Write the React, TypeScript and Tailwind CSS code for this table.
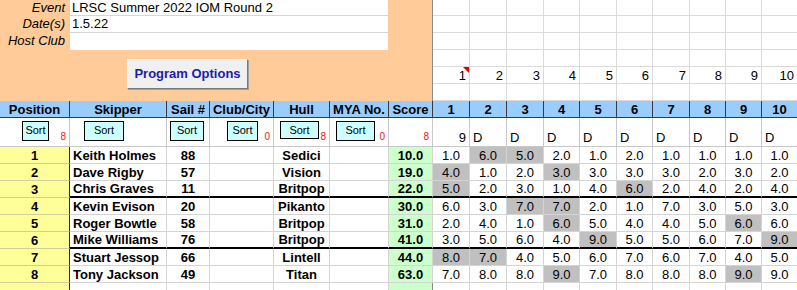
import React from "react";

const cols =
  "grid-cols-[70px_97px_43px_64px_56px_59px_44px_37px_37px_37px_36px_37px_36px_37px_36px_36px_36px]";
const raceCols = "grid-cols-[37px_37px_37px_36px_37px_36px_37px_36px_36px_36px]";

type Entry = {
  pos: number;
  name: string;
  sail: string;
  hull: string;
  score: string;
  races: number[];
  discards: number[];
};

const entries: Entry[] = [
  { pos: 1, name: "Keith Holmes", sail: "88", hull: "Sedici", score: "10.0", races: [1, 6, 5, 2, 1, 2, 1, 1, 1, 1], discards: [1, 2] },
  { pos: 2, name: "Dave Rigby", sail: "57", hull: "Vision", score: "19.0", races: [4, 1, 2, 3, 3, 3, 3, 2, 3, 2], discards: [0, 3] },
  { pos: 3, name: "Chris Graves", sail: "11", hull: "Britpop", score: "22.0", races: [5, 2, 3, 1, 4, 6, 2, 4, 2, 4], discards: [0, 5] },
  { pos: 4, name: "Kevin Evison", sail: "20", hull: "Pikanto", score: "30.0", races: [6, 3, 7, 7, 2, 1, 7, 3, 5, 3], discards: [2, 3] },
  { pos: 5, name: "Roger Bowtle", sail: "58", hull: "Britpop", score: "31.0", races: [2, 4, 1, 6, 5, 4, 4, 5, 6, 6], discards: [3, 8] },
  { pos: 6, name: "Mike Williams", sail: "76", hull: "Britpop", score: "41.0", races: [3, 5, 6, 4, 9, 5, 5, 6, 7, 9], discards: [4, 9] },
  { pos: 7, name: "Stuart Jessop", sail: "66", hull: "Lintell", score: "44.0", races: [8, 7, 4, 5, 6, 7, 6, 7, 4, 5], discards: [0, 1] },
  { pos: 8, name: "Tony Jackson", sail: "49", hull: "Titan", score: "63.0", races: [7, 8, 8, 9, 7, 8, 8, 8, 9, 9], discards: [3, 8] },
];

const headers = ["Position", "Skipper", "Sail #", "Club/City", "Hull", "MYA No.", "Score"];
const raceNums = [1, 2, 3, 4, 5, 6, 7, 8, 9, 10];

const meta = [
  { label: "Event", value: "LRSC Summer 2022 IOM Round 2" },
  { label: "Date(s)", value: "1.5.22" },
  { label: "Host Club", value: "" },
];

// button left offset, height, red count under it
const sorts = [
  { pl: "pl-[22px]", w: "w-[27px]", h: "h-[20px]", count: "8" },
  { pl: "pl-[14px]", w: "w-[40px]", h: "h-[20px]", count: "" },
  { pl: "pl-[3px]", w: "w-[34px]", h: "h-[20px]", count: "" },
  { pl: "pl-[17px]", w: "w-[31px]", h: "h-[20px]", count: "0" },
  { pl: "pl-[6px]", w: "w-[39px]", h: "h-[18px]", count: "8" },
  { pl: "pl-[6px]", w: "w-[39px]", h: "h-[20px]", count: "0" },
];

function SortButton({ w, h }: { w: string; h: string }) {
  return (
    <div
      className={`${w} ${h} flex shrink-0 justify-center border border-black bg-[#ccffff] pt-[2px] text-[11px] leading-[13px]`}
    >
      Sort
    </div>
  );
}

function ProgramOptions() {
  return (
    <button
      type="button"
      className="h-[30px] w-[121px] border border-t-[#fafafa] border-l-[#fafafa] border-b-[#7a7a7a] border-r-[#7a7a7a] bg-[#f0f0f0] text-[13px] font-bold text-[#1c1cab] shadow-[1px_1px_0_#a0a0a0]"
    >
      Program Options
    </button>
  );
}

export default function App() {
  return (
    <div className="h-[290px] w-[797px] overflow-hidden bg-white font-['Liberation_Sans',Arial,sans-serif] text-black">
      {/* top block */}
      <div className="flex h-[101px] w-max">
        <div className="flex w-[433px] shrink-0 flex-col border-r border-[#8a8a8a] bg-[#ffcc99]">
          {meta.map((m, i) => (
            <div key={m.label} className={`flex ${i === 0 ? "h-[16px]" : "h-[17px]"}`}>
              <div className="w-[70px] pr-[5px] text-right text-[13px] italic leading-[15px]">{m.label}</div>
              <div
                className={`w-[318px] bg-white pl-[2px] text-[13px] leading-[15px] ${
                  i < 2 ? "border-b border-[#d6d6d6]" : ""
                }`}
              >
                {m.value}
              </div>
            </div>
          ))}
          <div className="pl-[127px] pt-[9px]">
            <ProgramOptions />
          </div>
        </div>
        <div className={`grid ${raceCols} grid-rows-[16px_17px_17px_17px_17px_17px]`}>
          {Array.from({ length: 60 }).map((_, i) => {
            const row = Math.floor(i / 10);
            const col = i % 10;
            return (
              <div
                key={i}
                className="relative flex items-center justify-end border-r border-b border-[#dadada] pr-[3px] text-[13px] leading-[15px]"
              >
                {row === 4 && raceNums[col]}
                {row === 4 && col === 0 && (
                  <svg className="absolute right-0 top-0" width="6" height="6" viewBox="0 0 6 6">
                    <polygon points="0,0 6,0 6,6" fill="#e00000" />
                  </svg>
                )}
              </div>
            );
          })}
        </div>
      </div>

      {/* header row */}
      <div className={`grid ${cols} h-[17px] w-max`}>
        {headers.map((h) => (
          <div
            key={h}
            className="flex items-center justify-center border-r border-b border-[#3a3a3a] bg-[#99ccff] text-[13px] font-bold leading-[15px]"
          >
            {h}
          </div>
        ))}
        {raceNums.map((n) => (
          <div
            key={n}
            className="flex items-center justify-center border-r border-b border-[#3a3a3a] bg-[#99ccff] text-[13px] font-bold leading-[15px]"
          >
            {n}
          </div>
        ))}
      </div>

      {/* sort row */}
      <div className={`grid ${cols} h-[29px] w-max`}>
        {sorts.map((s, i) => (
          <div key={i} className={`flex border-r border-b border-[#c8c8c8] ${s.pl} pr-[3px]`}>
            <div className="pt-[3px]">
              <SortButton w={s.w} h={s.h} />
            </div>
            {s.count && (
              <span className="ml-auto self-end pb-[3px] text-[10px] leading-[12px] text-[#e01b1b]">{s.count}</span>
            )}
          </div>
        ))}
        <div className="flex items-end justify-end border-r border-b border-[#c8c8c8] pb-[3px] pr-[3px]">
          <span className="text-[10px] leading-[12px] text-[#e01b1b]">8</span>
        </div>
        {raceNums.map((n) => (
          <div
            key={n}
            className={`flex items-end border-r border-b border-[#c8c8c8] pb-[1px] text-[13px] leading-[15px] ${
              n === 1 ? "justify-end pr-[3px]" : "pl-[3px]"
            }`}
          >
            {n === 1 ? "9" : "D"}
          </div>
        ))}
      </div>

      {/* results */}
      {entries.map((e) => {
        const thick = e.pos === 3 || e.pos === 6;
        const line = thick ? "border-b-2 border-b-black" : "border-b border-b-[#d4d4d4]";
        const cell = `flex items-center border-r border-r-[#d4d4d4] ${line} text-[13px] leading-[15px]`;
        return (
          <div key={e.pos} className={`grid ${cols} h-[17px] w-max`}>
            <div className="flex items-center justify-center border-r border-b border-r-[#2a2a2a] border-b-[#cfcf9a] bg-[#ffff99] text-[13px] font-bold leading-[15px]">
              {e.pos}
            </div>
            <div className={`${cell} pl-[3px] font-bold`}>{e.name}</div>
            <div className={`${cell} justify-center font-bold`}>{e.sail}</div>
            <div className={cell} />
            <div className={`${cell} justify-center font-bold`}>{e.hull}</div>
            <div className={cell} />
            <div className={`${cell} justify-center border-r-[#8a8a8a] bg-[#ccffcc] font-bold`}>{e.score}</div>
            {e.races.map((r, i) => (
              <div
                key={i}
                className={`${cell} justify-center ${e.discards.includes(i) ? "bg-[#c0c0c0]" : ""}`}
              >
                {r.toFixed(1)}
              </div>
            ))}
          </div>
        );
      })}

      {/* empty trailing row */}
      <div className={`grid ${cols} h-[17px] w-max`}>
        <div className="border-r border-r-[#2a2a2a] bg-[#ffff99]" />
        <div className="border-r border-[#d4d4d4]" />
        <div className="border-r border-[#d4d4d4]" />
        <div className="border-r border-[#d4d4d4]" />
        <div className="border-r border-[#d4d4d4]" />
        <div className="border-r border-[#d4d4d4]" />
        <div className="border-r border-[#8a8a8a] bg-[#ccffcc]" />
        {raceNums.map((n) => (
          <div key={n} className="border-r border-[#d4d4d4]" />
        ))}
      </div>
    </div>
  );
}
